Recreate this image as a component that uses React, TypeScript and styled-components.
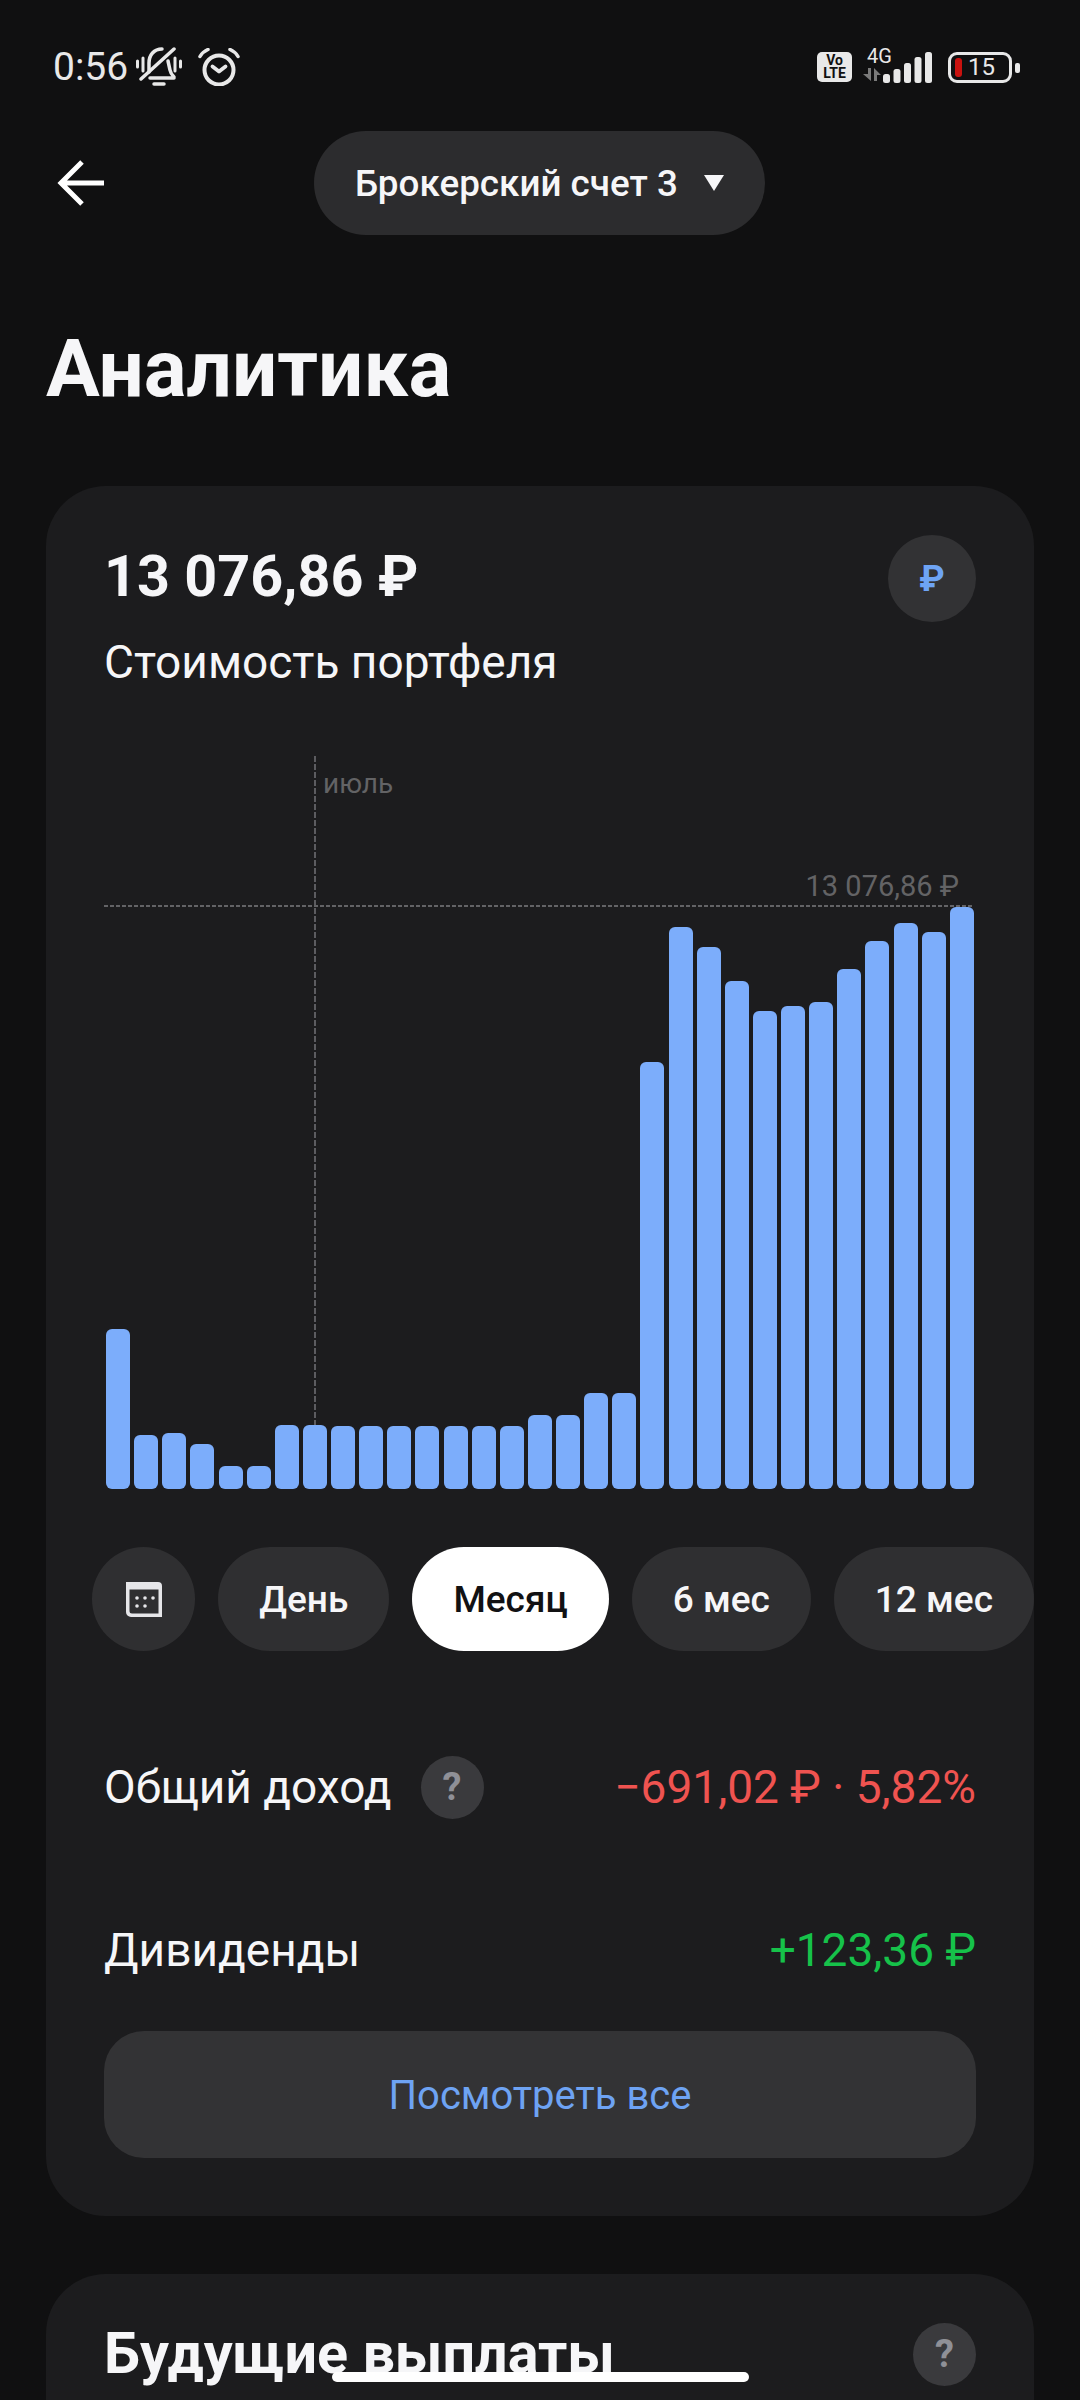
import React from 'react'
import styled, { createGlobalStyle } from 'styled-components'

const BAR_TOPS = [
  1329, 1435, 1433, 1444, 1466, 1466, 1425, 1425, 1426, 1426, 1426, 1426, 1426, 1426, 1426, 1415,
  1415, 1393, 1393, 1062, 927, 947, 981, 1011, 1006, 1002, 969, 941, 923, 932, 907,
]
const BAR_BOTTOM = 1489

const GlobalStyle = createGlobalStyle`
  html, body {
    margin: 0;
    padding: 0;
    background: #101011;
  }
  * {
    box-sizing: border-box;
  }
`

export default function App() {
  return (
    <Page>
      <GlobalStyle />
      <StatusBar>
        <StatusLeft>
          <Time>0:56</Time>
          <MuteIcon />
          <AlarmIcon />
        </StatusLeft>
        <StatusRight>
          <VolteBadge>
            <span>Vo</span>
            <span>LTE</span>
          </VolteBadge>
          <NetworkIcon />
          <Battery>
            <BatteryLevel />
            <BatteryText>15</BatteryText>
            <BatteryCap />
          </Battery>
        </StatusRight>
      </StatusBar>

      <TopBar>
        <BackButton>
          <svg width="48" height="48" viewBox="0 0 48 48" fill="none" stroke="#fff" strokeWidth="5">
            <path d="M47 24H4M25 3 4 24l21 21" />
          </svg>
        </BackButton>
        <AccountPill>
          Брокерский счет 3
          <Caret />
        </AccountPill>
      </TopBar>

      <Title>Аналитика</Title>

      <Card>
        <PortfolioHead>
          <div>
            <Amount>13 076,86 ₽</Amount>
            <AmountLabel>Стоимость портфеля</AmountLabel>
          </div>
          <CurrencyButton>₽</CurrencyButton>
        </PortfolioHead>

        <Chart>
          <MonthLine />
          <MonthLabel>июль</MonthLabel>
          <MaxLine />
          <MaxLabel>13 076,86 ₽</MaxLabel>
          {BAR_TOPS.map((top, i) => (
            <Bar key={i} style={{ height: BAR_BOTTOM - top }} />
          ))}
        </Chart>

        <Periods>
          <CalendarButton>
            <CalendarIcon />
          </CalendarButton>
          <Period>День</Period>
          <Period $active>Месяц</Period>
          <Period>6 мес</Period>
          <Period>12 мес</Period>
        </Periods>

        <IncomeRow>
          <RowLabel>
            Общий доход
            <Help>?</Help>
          </RowLabel>
          <RowValue $color="#ef5350">−691,02 ₽ · 5,82%</RowValue>
        </IncomeRow>
        <DividendRow>
          <RowLabel>Дивиденды</RowLabel>
          <RowValue $color="#16c24a">+123,36 ₽</RowValue>
        </DividendRow>
        <ViewAll>Посмотреть все</ViewAll>
      </Card>

      <PayoutsCard>
        <PayoutsTitle>Будущие выплаты</PayoutsTitle>
        <Help>?</Help>
      </PayoutsCard>

      <HomeIndicator />
    </Page>
  )
}

function MuteIcon() {
  return (
    <MuteSvg width="46" height="40" viewBox="0 0 46 40" fill="none" stroke="#e8e8e8" strokeLinecap="round">
      <path d="M1.500 14v6M7 11v13M39 11v13M44.500 14v6" strokeWidth="3" />
      <path d="M13 25v-9C13 8 18 2 26 2M32 14l2 9c.5 3 2 5 4 7M14 31h24" strokeWidth="3.500" />
      <path d="M18 37h10" strokeWidth="3.500" />
      <path d="M5 32 38 2" strokeWidth="3.500" />
    </MuteSvg>
  )
}

function AlarmIcon() {
  return (
    <AlarmSvg width="42" height="38" viewBox="0 0 42 38" fill="none" stroke="#e8e8e8" strokeLinecap="round">
      <circle cx="21" cy="22" r="14.500" strokeWidth="4" />
      <path d="M14.500 18.500 21 23.500l6.500-5" strokeWidth="3.800" strokeLinejoin="round" />
      <path d="M2 8.500C4 5 6.500 3 10 1.500M40 8.500C38 5 35.500 3 32 1.500" strokeWidth="3.500" />
    </AlarmSvg>
  )
}

function NetworkIcon() {
  return (
    <NetworkWrap>
      <NetworkType>4G</NetworkType>
      <svg width="70" height="34" viewBox="0 0 70 34">
        <path d="M5 18h3v13L0 24h5zM11 31V18l7 7h-4v6z" fill="#7a7a7a" />
        <rect x="20" y="24" width="7" height="9" rx="2.500" fill="#e8e8e8" />
        <rect x="30.500" y="19" width="7" height="14" rx="2.500" fill="#e8e8e8" />
        <rect x="41" y="13" width="7" height="20" rx="2.500" fill="#e8e8e8" />
        <rect x="51.500" y="7" width="7" height="26" rx="2.500" fill="#e8e8e8" />
        <rect x="62" y="2" width="7" height="31" rx="2.500" fill="#e8e8e8" />
      </svg>
    </NetworkWrap>
  )
}

function CalendarIcon() {
  return (
    <svg width="38" height="36" viewBox="0 0 38 36">
      <path
        fillRule="evenodd"
        d="M1 1h32a4 4 0 0 1 4 4v31H6a5 5 0 0 1-5-5zM4.500 8.500V30a2.500 2.500 0 0 0 2.500 2.500h26.500v-24z"
        fill="#e6e6e9"
      />
      <g fill="#e6e6e9">
        <circle cx="12" cy="17" r="1.800" />
        <circle cx="20" cy="17" r="1.800" />
        <circle cx="28" cy="17" r="1.800" />
        <circle cx="12" cy="25" r="1.800" />
        <circle cx="20" cy="25" r="1.800" />
      </g>
    </svg>
  )
}

const Page = styled.div`
  position: relative;
  width: 1080px;
  height: 2400px;
  overflow: hidden;
  background: #101011;
  font-family: Roboto, 'Liberation Sans', sans-serif;
  color: #f6f6f8;
`

const StatusBar = styled.div`
  display: flex;
  align-items: center;
  justify-content: space-between;
  height: 44px;
  margin-top: 45px;
  padding: 0 68px 0 53px;
`

const StatusLeft = styled.div`
  display: flex;
  align-items: center;
`

const MuteSvg = styled.svg`
  margin-left: 8px;
`

const AlarmSvg = styled.svg`
  margin-left: 16px;
`

const Time = styled.span`
  font-size: 39px;
  line-height: 44px;
  color: #e8e8e8;
`

const StatusRight = styled.div`
  display: flex;
  align-items: center;
`

const VolteBadge = styled.div`
  display: flex;
  flex-direction: column;
  align-items: center;
  justify-content: center;
  width: 35px;
  height: 30px;
  margin-right: 11px;
  border-radius: 5px;
  background: #e8e8e8;
  color: #101011;
  font-size: 14px;
  font-weight: 700;
  line-height: 13px;
`

const NetworkWrap = styled.div`
  position: relative;
  width: 70px;
  height: 34px;
  margin-right: 15px;
`

const NetworkType = styled.span`
  position: absolute;
  top: -5px;
  left: 4px;
  font-size: 20px;
  line-height: 22px;
  color: #e8e8e8;
`

const Battery = styled.div`
  position: relative;
  display: flex;
  align-items: center;
  width: 64px;
  height: 31px;
  padding-left: 4px;
  border: 3px solid #e8e8e8;
  border-radius: 9px;
`

const BatteryLevel = styled.div`
  width: 7px;
  height: 19px;
  margin-right: 6px;
  border-radius: 3px;
  background: #c9120f;
`

const BatteryText = styled.span`
  font-size: 24px;
  line-height: 24px;
  color: #e8e8e8;
`

const BatteryCap = styled.div`
  position: absolute;
  top: 8px;
  right: -11px;
  width: 5px;
  height: 10px;
  border-radius: 2px;
  background: #e8e8e8;
`

const TopBar = styled.div`
  display: grid;
  grid-template-columns: 1fr auto 1fr;
  align-items: center;
  height: 104px;
  margin-top: 42px;
`

const BackButton = styled.div`
  display: flex;
  align-items: center;
  padding-left: 57px;
`

const AccountPill = styled.div`
  display: flex;
  align-items: center;
  justify-content: space-between;
  width: 451px;
  height: 104px;
  margin-left: -1px;
  padding: 0 41px;
  border-radius: 52px;
  background: #2c2c2e;
  font-size: 36.8px;
  font-weight: 500;
  color: #f6f6f8;
`

const Caret = styled.span`
  width: 0;
  height: 0;
  border-left: 10px solid transparent;
  border-right: 10px solid transparent;
  border-top: 16px solid #f6f6f8;
`

const Title = styled.h1`
  margin: 89px 0 0 46px;
  font-size: 80px;
  line-height: 90px;
  font-weight: 700;
`

const Card = styled.section`
  margin: 72px 46px 0;
  padding: 58px 58px 58px;
  height: 1730px;
  border-radius: 60px;
  background: #1c1c1e;
`

const PortfolioHead = styled.div`
  display: flex;
  justify-content: space-between;
  align-items: flex-start;
`

const Amount = styled.div`
  font-size: 57.5px;
  line-height: 66px;
  font-weight: 700;
`

const AmountLabel = styled.div`
  margin-top: 26px;
  font-size: 46px;
  line-height: 52px;
  color: #f6f6f8;
`

const CurrencyButton = styled.div`
  display: flex;
  align-items: center;
  justify-content: center;
  width: 88px;
  height: 87px;
  margin-top: -9px;
  border-radius: 50%;
  background: #323234;
  color: #6ea4f4;
  font-size: 36px;
  font-weight: 700;
`

const Chart = styled.div`
  position: relative;
  display: flex;
  align-items: flex-end;
  justify-content: space-between;
  height: 733px;
  margin: 68px 2px 0;
`

const Bar = styled.div`
  width: 24px;
  border-radius: 6px;
  background: #7cadfb;
`

const MonthLine = styled.div`
  position: absolute;
  top: 0;
  left: 208px;
  bottom: 64px;
  width: 2px;
  background: repeating-linear-gradient(to bottom, #5c5c60 0 6px, transparent 6px 8px);
`

const MonthLabel = styled.span`
  position: absolute;
  top: 12px;
  left: 217px;
  font-size: 28px;
  line-height: 32px;
  color: #636365;
`

const MaxLine = styled.div`
  position: absolute;
  top: 149px;
  left: -2px;
  right: 0;
  height: 2px;
  background: repeating-linear-gradient(to right, #636366 0 4px, transparent 4px 6px);
`

const MaxLabel = styled.span`
  position: absolute;
  top: 114px;
  right: 15px;
  font-size: 29px;
  line-height: 32px;
  color: #636365;
`

const Periods = styled.div`
  display: flex;
  gap: 23px;
  height: 104px;
  margin: 58px -58px 0 -12px;
`

const CalendarButton = styled.div`
  display: flex;
  align-items: center;
  justify-content: center;
  width: 104px;
  border-radius: 50%;
  background: #2f2f31;
`

const Period = styled.div<{ $active?: boolean }>`
  display: flex;
  align-items: center;
  flex: 1 0 auto;
  justify-content: center;
  padding: 0 41px;
  border-radius: 52px;
  background: ${({ $active }) => ($active ? '#ffffff' : '#2f2f31')};
  color: ${({ $active }) => ($active ? '#111113' : '#f6f6f8')};
  font-size: 37px;
  font-weight: 500;
`

const IncomeRow = styled.div`
  display: flex;
  align-items: center;
  justify-content: space-between;
  height: 64px;
  margin-top: 104px;
`

const DividendRow = styled(IncomeRow)`
  margin-top: 99px;
`

const RowLabel = styled.div`
  display: flex;
  align-items: center;
  gap: 29px;
  font-size: 46px;
  color: #f6f6f8;
`

const RowValue = styled.div<{ $color: string }>`
  font-size: 46px;
  color: ${({ $color }) => $color};
`

const Help = styled.div`
  display: flex;
  align-items: center;
  justify-content: center;
  width: 63px;
  height: 63px;
  border-radius: 50%;
  background: #3a3a3d;
  color: #8f9097;
  font-size: 38px;
  font-weight: 700;
`

const ViewAll = styled.div`
  display: flex;
  align-items: center;
  justify-content: center;
  height: 127px;
  margin-top: 49px;
  padding-top: 2px;
  border-radius: 40px;
  background: #333335;
  color: #6ea3f3;
  font-size: 40px;
`

const PayoutsCard = styled.section`
  display: flex;
  align-items: center;
  align-content: flex-start;
  flex-wrap: wrap;
  justify-content: space-between;
  margin: 58px 46px 0;
  padding: 47px 58px 0;
  height: 300px;
  border-radius: 60px;
  background: #1c1c1e;
`

const PayoutsTitle = styled.h2`
  margin: 0;
  font-size: 57.5px;
  line-height: 66px;
  font-weight: 700;
`

const HomeIndicator = styled.div`
  position: absolute;
  left: 332px;
  bottom: 18px;
  width: 417px;
  height: 10px;
  border-radius: 5px;
  background: #ffffff;
`
